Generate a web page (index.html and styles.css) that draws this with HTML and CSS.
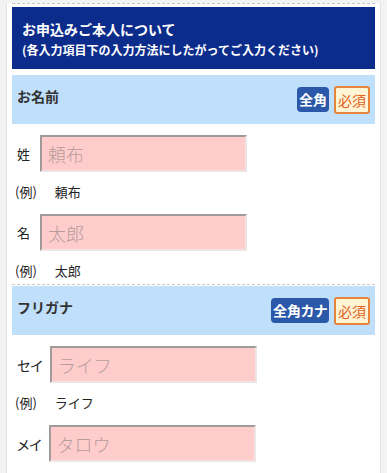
FILE: index.html
```html
<!DOCTYPE html>
<html lang="ja">
<head>
<meta charset="utf-8">
<title>お申込みご本人について</title>
<link rel="stylesheet" href="styles.css">
</head>
<body>
<div class="panel">
  <div class="rule top-rule"></div>
  <div class="header">
    <div class="header-title">お申込みご本人について</div>
    <div class="header-sub">(各入力項目下の入力方法にしたがってご入力ください)</div>
  </div>

  <div class="sec-head first">
    <div class="sec-title">お名前</div>
    <div class="badges">
      <span class="badge type">全角</span>
      <span class="badge req">必須</span>
    </div>
  </div>
  <div class="field">
    <span class="label">姓</span>
    <input class="text-input" type="text" placeholder="頼布">
  </div>
  <div class="example"><span class="ex-mark">(例)</span>頼布</div>
  <div class="field">
    <span class="label">名</span>
    <input class="text-input" type="text" placeholder="太郎">
  </div>
  <div class="example"><span class="ex-mark">(例)</span>太郎</div>

  <div class="rule sep-rule"></div>

  <div class="sec-head">
    <div class="sec-title">フリガナ</div>
    <div class="badges">
      <span class="badge type">全角カナ</span>
      <span class="badge req">必須</span>
    </div>
  </div>
  <div class="field">
    <span class="label kana">セイ</span>
    <input class="text-input" type="text" placeholder="ライフ">
  </div>
  <div class="example"><span class="ex-mark">(例)</span>ライフ</div>
  <div class="field">
    <span class="label kana">メイ</span>
    <input class="text-input" type="text" placeholder="タロウ">
  </div>
</div>
</body>
</html>
```

FILE: styles.css
```css
html, body {
  margin: 0;
  padding: 0;
}
body {
  background: #f3f3f3;
  height: 473px;
  overflow: hidden;
  font-family: "Noto Sans CJK JP", "Noto Sans", sans-serif;
  color: #222;
}
.panel {
  margin-left: 6px;
  width: 375px;
  box-sizing: border-box;
  min-height: 600px;
  background: #fff;
  border-left: 1px solid #e4e4e4;
  border-right: 1px solid #e4e4e4;
  padding: 0 5px;
}
.rule {
  border-top: 1px dashed #c8c8c8;
  height: 0;
}
.top-rule {
  margin-top: 3px;
  margin-bottom: 3px;
}
.header {
  background: #0c2c8c;
  color: #fff;
  font-weight: bold;
  padding: 11px 10px 9px 10px;
}
.header-title {
  font-size: 14px;
  line-height: 22px;
}
.header-sub {
  font-size: 12px;
  line-height: 20px;
}
.sec-head {
  background: #c0dffb;
  height: 49px;
  display: flex;
  align-items: center;
  justify-content: space-between;
  padding: 0 5px 0 5px;
  margin-top: 1px;
}
.sec-head.first {
  margin-top: 6px;
}
.sec-title {
  font-size: 14px;
  font-weight: bold;
  color: #333;
  padding-bottom: 7px;
}
.badges {
  display: flex;
  align-items: center;
  gap: 5px;
}
.badge {
  display: block;
  font-size: 14px;
  line-height: 1;
}
.badge.type {
  background: #2b58a8;
  color: #fff;
  font-weight: bold;
  border-radius: 4px;
  padding: 5px 2px 6px 2px;
  font-feature-settings: "palt";
}
.badge.req {
  background: #fff4d4;
  color: #e0601c;
  border: 2px solid #e6843c;
  border-radius: 3px;
  padding: 5px 2px 5px 2px;
}
.field {
  display: flex;
  align-items: center;
  margin-top: 11px;
  padding-left: 5px;
}
.example + .field {
  margin-top: 14px;
}
.label {
  font-size: 13px;
  margin-right: 10px;
  color: #222;
}
.label.kana {
  font-feature-settings: "palt";
  font-size: 14px;
  margin-right: 7px;
}
.text-input {
  width: 207px;
  height: 37px;
  box-sizing: border-box;
  margin: 0;
  background: #ffcccc;
  border-style: solid;
  border-width: 2px;
  border-color: #a09a9a #efe4e4 #efe4e4 #a09a9a;
  padding: 0 6px;
  font-family: "Noto Sans CJK JP", sans-serif;
  font-size: 18px;
  color: #333;
  outline: none;
}
.text-input::placeholder {
  color: #b59d9d;
  font-weight: 300;
}
.example {
  padding-top: 12px;
  padding-left: 3px;
  font-size: 13px;
  line-height: 16px;
  color: #222;
}
.ex-mark {
  margin-right: 18px;
}
.sep-rule {
  margin-top: 5px;
}
```
